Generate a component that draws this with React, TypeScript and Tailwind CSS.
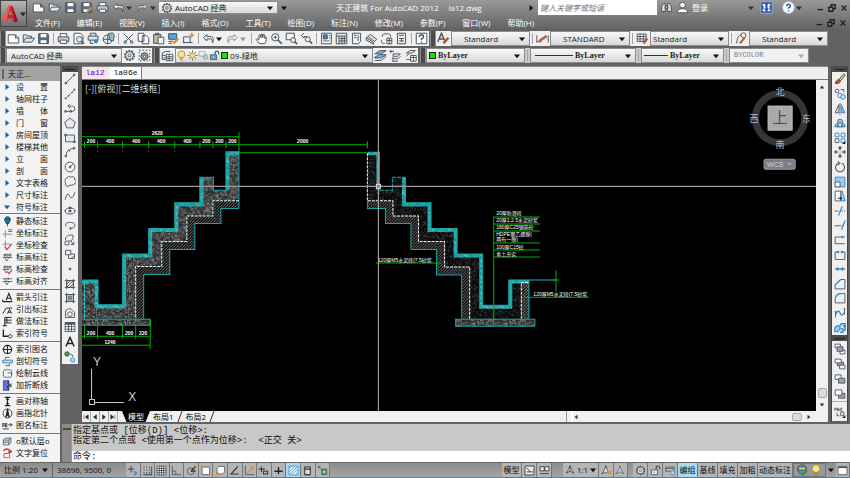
import React from "react";

type Glyphs = Record<string, React.ReactNode>;

const BLUE = "#2f86cc";
const ORANGE = "#e2902f";

/* Every icon is drawn on a 16 x 16 grid. */
const glyphs: Glyphs = {
  new: <path d="M1.500 3.500h9l4 4v6h-13zM10.500 3.500v4h4" fill="#fff" />,
  open: <path d="M1.500 12.500v-9h4l1 1.500h5v2.500M1.500 12.500l3-5h11l-3.500 5z" fill="#dfe6ea" />,
  save: (
    <>
      <path d="M2 2h11l1 1v11H2z" fill="#5b6c7d" />
      <path d="M4.500 2.500h7v4h-7zM4.500 10h7v3.500h-7z" fill="#fff" stroke="none" />
    </>
  ),
  saveAs: (
    <>
      <path d="M2 2h11l1 1v11H2z" fill="#5b6c7d" />
      <path d="M4.500 2.500h7v4h-7zM4.500 10h5v3.500h-5z" fill="#fff" stroke="none" />
      <path d="M8 14l6-6" stroke={ORANGE} strokeWidth="2.500" />
    </>
  ),
  print: (
    <>
      <path d="M4 6V2h8v4" fill="#fff" />
      <path d="M1.500 6h13v6h-13z" fill="#c7ced3" />
      <path d="M4 10h8v4H4z" fill="#fff" />
    </>
  ),
  preview: (
    <>
      <path d="M2.500 1.500h8l3 3v10h-11z" fill="#fff" />
      <circle cx="9" cy="9" r="3.500" fill="#dcebf4" />
      <path d="M11.500 11.500l3 3" strokeWidth="2" />
    </>
  ),
  publish: (
    <>
      <path d="M4 5V1.500h7V5M1.500 5h12v5h-12z" fill="#dfe4e8" />
      <circle cx="11" cy="11.500" r="2.500" fill={BLUE} stroke="none" />
      <path d="M4 10v4h4" />
    </>
  ),
  globe3d: (
    <>
      <circle cx="7" cy="9" r="5.500" fill="#e7eef2" />
      <path d="M7 3.500v11M1.500 9h11" />
      <path d="M8 2l5-1 2 3-1 7-4-1z" fill="#8fcbe0" />
      <path d="M9 4l3 0v4" stroke={ORANGE} />
    </>
  ),
  cut: <path d="M2 2l10 10M14 2L4 12M2.500 12.500a1.500 1.500 0 1 0 3 0a1.500 1.500 0 1 0-3 0M10.500 12.500a1.500 1.500 0 1 0 3 0a1.500 1.500 0 1 0-3 0" />,
  copy: <path d="M1.500 1.500h7v10h-7zM6.500 4.500h5l3 3v7h-8z" fill="#fff" />,
  paste: (
    <>
      <path d="M2 3h9v11H2z" fill="#c2b39a" />
      <path d="M4.500 1.500h4v2h-4z" />
      <path d="M7.500 6.500h7v8h-7z" fill="#fff" />
    </>
  ),
  match: (
    <>
      <path d="M2 2h10v7H2z" fill="#5d9fd3" />
      <path d="M2 11.500h6M2 14h4" />
      <path d="M8 14l6-6" stroke={ORANGE} strokeWidth="3" />
    </>
  ),
  block: (
    <>
      <path d="M2 6h8v7H2zM1 13h4M9 13h4" />
      <path d="M12 1v6M9 4h6" stroke={ORANGE} strokeWidth="2" />
    </>
  ),
  undo: <path d="M6 3L2 7l4 4V8.500h5q2 0 2 5 3-8-3-8H6z" fill="#eef2f4" />,
  redo: <path d="M10 3l4 4-4 4V8.500H5q-2 0-2 5-3-8 3-8h4z" fill="#eef2f4" opacity="0.600" />,
  hand: <path d="M5 14l-3.500-5 1-1L5 9.500V4l1.500-.5L7.500 7V2.500L9 2.500 9.500 7l1-4 1.500.5V8l1-2 1 .5-.5 5-1.500 3z" fill="#fff" />,
  zoomRt: (
    <>
      <circle cx="6.500" cy="6.500" r="4.500" fill="#eaf3f8" />
      <path d="M10 10l4.500 4.500" strokeWidth="2" />
      <path d="M4.500 6.500h4M6.500 4.500v4" />
    </>
  ),
  zoomWin: (
    <>
      <path d="M1.500 1.500h10v8h-10z" />
      <circle cx="10" cy="10" r="3" fill="#eaf3f8" />
      <path d="M12 12l3 3" strokeWidth="2" />
    </>
  ),
  zoomPrev: (
    <>
      <path d="M5 1.500L1.500 4.500 5 7.500V5.500h4" />
      <circle cx="9.500" cy="9" r="3" fill="#eaf3f8" />
      <path d="M12 11.500l3 3" strokeWidth="2" />
    </>
  ),
  props: (
    <>
      <path d="M2 1.500h12v13H2z" fill="#fff" />
      <path d="M4 3.500h5v5H4z" fill={BLUE} />
      <path d="M4 11h8M11 4.500h2M11 7.500h2" />
    </>
  ),
  center: (
    <>
      <path d="M1.500 1.500h13v13h-13z" fill="#e5eaed" />
      <path d="M1.500 5h13M5 5v9.500M5 8h9M5 11h9M8.500 5v9.500M11.500 5v9.500" />
    </>
  ),
  palette: <path d="M3 1.500h10v10l-3 3H3zM10 4v7M5 4h3M5 7h3" fill="#eef1f3" />,
  sheet: <path d="M1.500 7l5-4 8 6-4 4zM1.500 7v3l9 5v-2M4 6l7 5" fill="#dfe5e9" />,
  markup: <path d="M3 6a3 3 0 0 1 5-3 3 3 0 0 1 5 3M2 10a3 3 0 0 0 4 4M8.500 7.500h6v7h-6zM8.500 10.500h6M11.500 7.500v7" />,
  calc: (
    <>
      <path d="M3 1.500h10v13H3z" fill="#e8edf0" />
      <path d="M5 4h6M5 8h6M5 11h6M8 8v4" />
    </>
  ),
  help: (
    <>
      <path d="M1.500 1.500h13v13h-13z" fill="#fff" />
      <path d="M5.500 6q0-2.500 2.500-2.500T10.500 6Q10.500 7.500 8 8.500v1.500M8 12v1.500" strokeWidth="1.800" />
    </>
  ),
  textStyle: (
    <>
      <path d="M1 12L5.500 1.500 10 12M3 8.500h5" strokeWidth="1.800" />
      <path d="M8 14l6-7" stroke="#ad6130" strokeWidth="3" />
    </>
  ),
  dimStyle: (
    <>
      <path d="M1 4v9M15 4v9M1 12h6" />
      <path d="M4 11l9-6" stroke="#ad6130" strokeWidth="3" />
    </>
  ),
  tableStyle: (
    <>
      <path d="M1.500 2.500h11v9h-11zM1.500 5.500h11M5 2.500v9M9 2.500v9M1.500 8.500h11" fill="#fff" />
      <path d="M9 14l5-6" stroke="#ad6130" strokeWidth="3" />
    </>
  ),
  leaderStyle: (
    <>
      <path d="M2 14Q3 4 8 3" />
      <circle cx="10.500" cy="4" r="3" fill="#fff" />
      <path d="M6 14l6-7" stroke="#ad6130" strokeWidth="2.500" />
    </>
  ),
  gear: (
    <>
      <circle cx="8" cy="8" r="5.800" strokeDasharray="2.300 1.300" strokeWidth="2" />
      <circle cx="8" cy="8" r="4.800" fill="#eee" />
      <circle cx="8" cy="8" r="1.800" />
    </>
  ),
  gearFrame: (
    <>
      <path d="M1.500 1.500h13v13h-13z" strokeDasharray="2 2" />
      <circle cx="8" cy="9" r="4.500" fill="#8e9ba6" />
      <circle cx="8" cy="9" r="1.500" fill="#fff" />
    </>
  ),
  layers: (
    <>
      <path d="M1.500 5l4-2h6M1.500 5v8h4M1.500 8h4M3 11h3" />
      <path d="M6.500 6.500h8v8h-8zM6.500 9.500h8M6.500 12h8M10 6.500v8" fill="#fff" />
    </>
  ),
  bulb: <path d="M5.500 11Q3 8.500 3 6a5 5 0 0 1 10 0q0 2.500-2.500 5zM6 12.500h4M6.500 14.500h3" fill="#ffe37d" stroke="#9c8751" />,
  sun: (
    <>
      <path d="M8 .5v3M8 12.500v3M.5 8h3M12.500 8h3M3 3l2 2M11 11l2 2M13 3l-2 2M5 11l-2 2" />
      <circle cx="8" cy="8" r="3.500" fill="#ffe37d" stroke="#a98e3d" />
    </>
  ),
  sunVp: (
    <g opacity="0.450">
      <path d="M1.500 2h9v7h-9zM8 7h6v6H8z" />
      <circle cx="11" cy="10" r="2" />
    </g>
  ),
  unlock: (
    <>
      <path d="M9 7V4a2.500 2.500 0 0 1 5 0v2" strokeWidth="1.800" />
      <path d="M2 7h9v7H2z" fill="#5fa4d8" />
      <path d="M6 9.500v2" stroke="#fff" />
    </>
  ),
  unlockGray: (
    <>
      <path d="M9 7V4a2.500 2.500 0 0 1 5 0v2" strokeWidth="1.800" />
      <path d="M2 7h9v7H2z" fill="#e6e6e6" />
      <path d="M6 9.500v2" />
    </>
  ),
  layerMake: (
    <>
      <path d="M1 6l6-4h8l-6 4zM1 10l6-3h8l-6 4H1z" fill="#74b5e3" />
      <path d="M1 14h8l6-5" />
    </>
  ),
  layerPrev: <path d="M1 3h5M1 3l2-2M1 3l2 2M5 6h9l-3 3H5zM5 10l-1 2h7l3-3M5 13l-1 2h7" fill="#eee" />,
  layerState: (
    <>
      <path d="M3 5l4-3h7l-4 3zM3 9l3-3M3 13h4" />
      <path d="M8 8h7v7H8zM8 10.500h7M11.500 8v7" fill="#fff" />
    </>
  ),
  line: <path d="M2.500 13.500l11-11M1.500 12.500h2v2h-2zM12.500 1.500h2v2h-2z" />,
  xline: <path d="M1.500 14.500l13-13M5 11h1.500v-1.500M10 6h1.500V4.500M1.500 12.500v2h2M12.500 1.500h2v2" strokeDasharray="4 1" />,
  pline: <path d="M2 12.500h9a3.500 3.500 0 0 0 0-7H6M8 3L5 5.500 8 8M1 11.500h2v2H1zM8 11.500h2v2H8z" />,
  polygon: <path d="M8 1.500L15 7l-2.500 7.500h-9L1 7z" fill="#e4eaee" />,
  rect: <path d="M2 4h12v9H2zM1 3h2v2H1zM13 12h2v2h-2z" fill="#e4eaee" />,
  arc: <path d="M2.500 13.500Q3 4 13.500 3M1.500 12.500h2v2h-2zM12.500 2h2v2h-2zM5.500 5.500h2v2" />,
  circle: (
    <>
      <circle cx="8" cy="8" r="6.500" fill="#f2f5f6" />
      <path d="M8 8l4-4M7 7h2v2H7z" />
    </>
  ),
  cloud: <path d="M4 4a3 3 0 0 1 5-1 3 3 0 0 1 5 3 3 3 0 0 1-1 6 3 3 0 0 1-5 1 3 3 0 0 1-6-2 3 3 0 0 1 0-4 2 2 0 0 1 2-3z" fill="#eef2f4" />,
  spline: <path d="M1.500 13Q4 1 7.500 8t7-5" />,
  ellipse: (
    <>
      <ellipse cx="8" cy="8" rx="6.500" ry="4" fill="#f2f5f6" />
      <path d="M7 7h2v2H7zM7 3h2v1.500H7zM1 7.500h1.500M14 7.500h1" strokeWidth="1.500" />
    </>
  ),
  ellArc: <path d="M3 10Q0 5 7 4.500T14.500 8 9 12.500M9 11v3l-2-1.500z" />,
  insert: <path d="M2 8V5l4-3.500h6V6l-3 4M1.500 9.500h5v5h-5zM7 8l6 6M13 10v4H9" />,
  mkBlock: <path d="M2 3h7v6H2zM6 9v5h8V8h-5M13 11l-4 3" fill="#eceff1" />,
  point: <path d="M7 7h2v2H7z" fill="#4b5560" />,
  hatch: <path d="M3.500 3.500h9v9h-9zM1 3.500h14M1 12.500h14M3.500 1v14M12.500 1v14M4 8l4-4M4 12l8-8M8 12l4-4" />,
  gradient: (
    <>
      <path d="M3.500 3.500h9v9h-9zM1 3.500h14M1 12.500h14M3.500 1v14M12.500 1v14" />
      <path d="M5 5h6v6H5z" fill="#7b8791" stroke="none" />
    </>
  ),
  region: (
    <>
      <path d="M2 14V5q4-5 8-2l4 4v7z" fill="#e7ecef" />
      <circle cx="8" cy="9.500" r="3" fill="#fff" />
    </>
  ),
  table: (
    <>
      <path d="M1.500 2h13v12h-13z" fill="#fff" />
      <path d="M1.500 3.500h13" strokeWidth="3" />
      <path d="M1.500 7.500h13M1.500 11h13M6 2v12M10 2v12" />
    </>
  ),
  mtext: <path d="M2.500 14L8 2l5.500 12M4.500 10h7" strokeWidth="2" stroke="#222" />,
  addSel: (
    <>
      <circle cx="4" cy="4" r="3" fill="#4b9c3b" />
      <circle cx="11.500" cy="12" r="2.800" fill="#bfe2f6" stroke={BLUE} />
      <path d="M8 4q4 0 4 4" />
    </>
  ),
  erase: (
    <>
      <path d="M6 9l7-8 2 2-7 8z" fill="#f2bd60" />
      <path d="M2 12l4-4 3 3-3 3H2z" fill="#b85432" stroke="#8b3a22" />
    </>
  ),
  copyObj: (
    <>
      <circle cx="4" cy="4" r="2.500" />
      <path d="M9 2h4v4" />
      <circle cx="8" cy="10" r="3" stroke={BLUE} />
      <circle cx="12" cy="12" r="3" stroke={BLUE} fill="#cde6f7" />
    </>
  ),
  mirror: (
    <>
      <path d="M6.500 2v11h-5z" fill="#dfe5e9" />
      <path d="M9.500 2v11h5z" fill="#7abced" stroke={BLUE} />
      <path d="M8 0v16" strokeDasharray="2 1" />
    </>
  ),
  offset: (
    <>
      <path d="M1.500 13h13q0-4-3-4V7q0-4-3.500-4T5 7v2q-3.500 0-3.500 4z" fill="#9ccdf0" stroke={BLUE} strokeWidth="1.500" />
      <path d="M4 13h8q0-2-2.500-2V8Q8 5.500 6.500 8v3Q4 11 4 13z" fill="#fff" />
    </>
  ),
  array: (
    <>
      <path d="M1.500 9h5v5h-5z" fill="#fff" />
      <path d="M1.500 1.500h5v5h-5zM9.500 1.500h5v5h-5zM9.500 9h5v5h-5z" stroke={BLUE} />
      <path d="M15 12v4h-4z" fill="#111" stroke="none" />
    </>
  ),
  move: <path d="M8 1v5M8 10v5M1 8h5M10 8h5M6 3l2-2 2 2M6 13l2 2 2-2M3 6L1 8l2 2M13 6l2 2-2 2" strokeWidth="1.600" />,
  rotate: <path d="M5.500 3a6 6 0 1 0 5 0M5 .5L8 3 5 5.500" strokeWidth="1.400" />,
  scale: (
    <>
      <path d="M1.500 1.500h13v13h-13z" fill="#9ccdf0" stroke={BLUE} />
      <path d="M1.500 8h6.500v6.500H1.500z" fill="#fff" />
    </>
  ),
  stretch: (
    <>
      <path d="M9 1.500h2l4 13H9z" fill="#9ccdf0" stroke={BLUE} />
      <path d="M1.500 1.500H9v13H1.500z" fill="#fff" />
      <path d="M5 11h5M8 9l2 2-2 2" stroke="#111" />
    </>
  ),
  trim: (
    <>
      <path d="M1 8h5" />
      <path d="M6 14l5-12" stroke={BLUE} strokeWidth="1.600" />
      <path d="M10 8h5" strokeDasharray="2 1" stroke={BLUE} />
    </>
  ),
  extend: (
    <>
      <path d="M1 9h6" />
      <path d="M7 9h4" strokeDasharray="2 1" />
      <path d="M10 14l5-12" stroke={BLUE} strokeWidth="1.600" />
    </>
  ),
  breakPt: (
    <>
      <path d="M9 4H1.500v9h13M14.500 4h-2" />
      <path d="M10 3h2v2h-2z" fill={BLUE} stroke={BLUE} />
    </>
  ),
  breakTwo: (
    <>
      <path d="M4 4H1.500v10h13V4H12" />
      <path d="M4.500 3h2v2h-2zM9.500 3h2v2h-2z" fill={BLUE} stroke={BLUE} />
    </>
  ),
  join: (
    <>
      <path d="M1 8h14" />
      <path d="M4 6l3 2-3 2zM12 6L9 8l3 2z" fill={BLUE} stroke={BLUE} />
    </>
  ),
  chamfer: (
    <>
      <path d="M9 2h5.500v12.500h-13V9" fill="#eef1f3" />
      <path d="M1.500 9L9 2" stroke={BLUE} strokeWidth="1.800" />
    </>
  ),
  fillet: (
    <>
      <path d="M10 2h4.500v12.500h-13V10" fill="#eef1f3" />
      <path d="M1.500 10Q2 2 10 2" stroke={BLUE} strokeWidth="1.800" />
    </>
  ),
  blend: (
    <>
      <path d="M2 14V6M14 10V2M1 6h2M13 2h2" />
      <path d="M2 10q4-8 6-2t6-1" stroke={BLUE} strokeWidth="1.600" />
    </>
  ),
  explode: <path d="M1 8l3-3h4v4l-3 4H1zM8 4l2-2h5l-2 4M9 9h3v5H8M13 7l2-2v5l-2 2" fill="#9ccdf0" stroke={BLUE} strokeWidth="1.500" />,
  front: (
    <>
      <path d="M1.500 1.500h7v5h-7zM8 9.500h6.500v5H8z" fill="#fff" />
      <path d="M4 5h8v6H4z" fill="#9aa4b2" />
    </>
  ),
  back: (
    <>
      <path d="M4.500 5.500h8v5h-8z" fill="#9aa4b2" />
      <path d="M1.500 1.500h8v5h-8zM7.500 9.500h7v5h-7z" fill="#fff" />
    </>
  ),
  above: (
    <>
      <path d="M1.500 2.500h8v6h-8z" fill="#fff" />
      <path d="M6 7h8.500v6.500H6z" fill="#9aa4b2" />
    </>
  ),
  under: (
    <>
      <path d="M6 7h8.500v6.500H6z" fill="#9aa4b2" />
      <path d="M1.500 2.500h9v7h-9z" fill="#fff" />
    </>
  ),
  abc: (
    <>
      <path d="M1 6V3h2v3M5 6V2M5 6h2V4H5M11 3H9v3h2M4 9v4h3M9 8h4v5H9z" />
      <path d="M15 12v4h-4z" fill="#111" stroke="none" />
    </>
  ),
  binoculars: <path d="M2 13V7l2-4h2.500v10zM9.500 13V3H12l2 4v6zM6.500 6h3v3h-3z" fill="#d8dde0" />,
  user: (
    <>
      <circle cx="8" cy="5" r="3.500" fill="#fff" />
      <path d="M1.500 14.500q0-5 6.500-5t6.500 5z" fill="#fff" />
    </>
  ),
  exchange: (
    <>
      <path d="M1 1h14v14H1z" fill="#2d55a5" stroke="#93a9d3" />
      <path d="M6 4v5M10 4v5M6 11v2M10 11v2M3 5l2-1v8l-2-1M13 5l-2-1v8l2-1" stroke="#fff" strokeWidth="1.300" />
    </>
  ),
  helpRound: (
    <>
      <circle cx="8" cy="8" r="7" fill="#fff" stroke="#d0d7e2" />
      <path d="M5.800 6.500q0-2.500 2.200-2.500t2.200 2.200Q10.200 7.500 8 8.500v1M8 11.500V13" strokeWidth="2" stroke="#3166b5" />
    </>
  ),
  pin: <path d="M8 15v-4M5 8q-2-2-1-4 1-3 4-3t4 3q1 2-1 4l-1 3H6z" fill="#1b6f88" stroke="#173f5c" />,
  coord: (
    <>
      <path d="M1 9h14M5 14V3" stroke="#8077b0" />
      <path d="M9 5h6M9 2.500h6" />
    </>
  ),
  coordChk: (
    <>
      <path d="M1 6h13M5 13V1" stroke="#8077b0" />
      <path d="M4 10l3 4 7-8" stroke="#dd4d38" strokeWidth="2" />
    </>
  ),
  level: <path d="M1 8h14M4 8l3 5 3-5M3 3h2v3H3zM7 3h2v3H7zM11 3h2v3h-2z" />,
  levelChk: (
    <>
      <path d="M1 8h10M3 8l3 5 2-3M3 3h2v3H3zM7 3h2v3H7zM11 3h2v3h-2z" />
      <path d="M8 11l2 3 5-6" stroke="#dd4d38" strokeWidth="2" />
    </>
  ),
  levelAl: <path d="M1 4h14M1 8h14M4 4l3 4M4 8l3 5 3-5M9 2v4" />,
  arrowA: <path d="M1 14h3M1 14v-3M6 12l4-10 4 10M7.500 9h5M4 14h11" stroke="#222" strokeWidth="1.600" />,
  leadA: <path d="M1 14l5-8h9M8 14l3-6 3 6M9 12h4" stroke="#222" strokeWidth="1.400" />,
  practice: <path d="M4 15V2M4 2h10M4 6h10M4 10h10M7 2v8M1 14h6" stroke="#222" strokeWidth="1.400" />,
  indexS: (
    <>
      <path d="M2 2v10h7" stroke="#222" strokeWidth="2" />
      <circle cx="12" cy="12" r="2.500" stroke="#222" />
    </>
  ),
  indexN: (
    <>
      <circle cx="8" cy="8" r="6" stroke="#222" strokeWidth="1.600" />
      <path d="M1 8h14M8 2v12" stroke="#222" strokeWidth="1.500" />
    </>
  ),
  section: (
    <>
      <path d="M1 6h14v4H1z" fill="#bde0ef" stroke="#2f7da1" />
      <path d="M5 2h6M5 14h6M5 2v3M11 11v3" stroke="#444" />
    </>
  ),
  rcloud: <path d="M2 4q2-3 4-1 2-2 4 0 3-2 4 1v8q-2 3-4 1-2 2-4 0-3 2-4-1zM8 7h6v3" />,
  zig: (
    <>
      <path d="M2 1h8v14H2z" fill="#6672d6" stroke="#3a44a8" />
      <path d="M9 1v5l4 2-6 2 2 1v4M13 5v6" stroke="#222" />
    </>
  ),
  axis: <path d="M8 2v12M4 2h8M4 14h8M6 5h4M6 11h4" stroke="#222" strokeWidth="1.800" />,
  north: (
    <>
      <circle cx="8" cy="8" r="6.500" stroke="#222" />
      <path d="M8 1l2.500 12L8 11l-2.500 2z" fill="#222" stroke="#222" />
    </>
  ),
  drawName: <path d="M1 10V5h2v5M5 5v5h2V5zM9 7h5M1 13h9M12 5l3 2-3 2" stroke="#222" />,
  defLayer: <path d="M2 6l3-3h8v6l-3 4H2zM2 6h8v7M10 6l3-3M2 9h8" fill="#dbe9f1" />,
  textReset: (
    <>
      <path d="M2 4q5-5 10 0v3M12 7l-3-2M12 7l2-3" stroke="#cf3030" strokeWidth="2" />
      <path d="M3 8h8v6H3z" fill="#fff" stroke="#cf3030" />
    </>
  ),
  infer: (
    <>
      <path d="M1 6h9M6 1v10" strokeWidth="1.800" />
      <path d="M10 9l4 3-4 3" stroke={BLUE} strokeWidth="2" />
    </>
  ),
  snap: <path d="M3 2v2M3 6v2M3 10v2M7 2v2M7 6v2M7 10v2M11 2v2M11 6v2M11 10v2M2 14h12V2" strokeWidth="1.500" />,
  grid: <path d="M1.500 1.500h13v13h-13zM1.500 5h13M1.500 8h13M1.500 11h13M5 1.500v13M8 1.500v13M11 1.500v13" fill="#e5e5e5" />,
  ortho: <path d="M2 1v13h13M2 9h5v5" />,
  polar: (
    <>
      <circle cx="7" cy="9" r="5" />
      <path d="M7 9l7-7M7 9h7" stroke="#333" strokeWidth="1.800" />
    </>
  ),
  osnap: (
    <>
      <path d="M3 3h11v11H3z" fill="#fff" />
      <path d="M1 1h4v4H1z" fill={ORANGE} stroke="none" />
    </>
  ),
  osnap3: (
    <>
      <path d="M3 5l3-3h8v8l-3 3H3z" fill="#fff" />
      <circle cx="4" cy="13" r="2" stroke={ORANGE} />
    </>
  ),
  otrack: <path d="M13 2L3 13h11" stroke="#333" strokeWidth="1.600" />,
  ducs: (
    <>
      <path d="M2 1v13h13" />
      <path d="M4 12l9-9M9 3h4v4" stroke={ORANGE} strokeWidth="1.600" />
    </>
  ),
  dyn: <path d="M1 6h9M5 2v8M8 9h6v4H8z" strokeWidth="1.500" stroke="#333" />,
  lwt: <path d="M2 9h12M8 3v10" stroke="#222" strokeWidth="2" />,
  tpy: <path d="M1.500 1.500h13v13h-13zM2 5l3-3M2 10l8-8M2 14L14 2M6 14l8-8M11 14l3-3" fill="#eaf7ff" stroke="#3b93cc" />,
  qp: <path d="M4 3h8v11H4zM4 6h8" fill="#ddd" stroke="#333" strokeWidth="1.500" />,
  sc: (
    <>
      <path d="M2 2l5 5M2 2h3M2 2v3" />
      <path d="M7 6h7v8H7z" fill="#4da64a" />
      <path d="M9 10h3M10.500 8.500v3" stroke="#fff" />
    </>
  ),
  paper: <path d="M1.500 1.500h13v13h-13zM4 4l5 6H4M9 10h4" fill="#e9e9e9" stroke="#333" />,
  quickView: <path d="M1.500 2.500h6v6h-6zM8.500 2.500h6v6h-6zM1.500 12.500h13" fill="#eee" stroke="#333" />,
  anno: <path d="M8 1L6 7l-4 6 6-3 6 3-4-6zM8 2v8" fill="#eee" stroke="#333" />,
  annoOn: (
    <>
      <path d="M7 1L5 7l-4 6 6-3 5 3-3-6z" fill="#eee" stroke="#444" />
      <circle cx="12" cy="11" r="2.800" fill={ORANGE} stroke="none" />
    </>
  ),
  annoOff: <path d="M7 1L5 7l-4 6 6-3 6 3-4-6z" fill="#ccc" stroke="#6b6b6b" />,
  hw: (
    <>
      <path d="M1 3h12v6H1zM1 5h12" fill="#bcc3c9" />
      <circle cx="11" cy="11" r="3" fill="#b8def6" stroke={BLUE} />
    </>
  ),
  tray: (
    <>
      <circle cx="8" cy="7" r="6" fill="#4a8fd8" />
      <path d="M3 4h10v4H3z" fill="#f0cf55" />
      <path d="M6 12l3 3 6-6" stroke="#3c9a33" strokeWidth="2.500" />
    </>
  ),
  clean: (
    <>
      <path d="M1.500 2h13v12h-13z" fill="#fff" stroke="#4b5560" />
      <path d="M1.500 3.500h13" strokeWidth="2" />
    </>
  ),
};

function Icon({ name, className = "size-[13px]" }: { name: string; className?: string }) {
  return (
    <svg viewBox="0 0 16 16" fill="none" stroke="#4b5560" strokeWidth="1.200" className={`shrink-0 ${className}`} aria-hidden="true">
      {glyphs[name]}
    </svg>
  );
}

function Caret({ className = "text-[#111]" }: { className?: string }) {
  return (
    <svg viewBox="0 0 8 8" className={`size-1.5 shrink-0 ${className}`} fill="currentColor" aria-hidden="true">
      <path d="M0 2h8L4 7z" />
    </svg>
  );
}

function ToolButton({ name, className = "w-[15px]" }: { name: string; className?: string }) {
  return (
    <button type="button" aria-label={name} className={`flex shrink-0 items-center justify-center ${className}`}>
      <Icon name={name} />
    </button>
  );
}

function Sep() {
  return (
    <span className="flex w-[5px] shrink-0 justify-center py-0.5">
      <span className="w-px bg-[#a5a5a5]" />
    </span>
  );
}

type DropProps = { label: string; value: string; className: string; pad?: string; font?: string; disabled?: boolean; children?: React.ReactNode };

function Drop({ label, value, className, pad = "pl-2.5", font = "", disabled = false, children }: DropProps) {
  return (
    <div className={`relative flex shrink-0 items-center border border-[#8b8b8b] ${disabled ? "bg-[#f1f1f1]" : "bg-linear-to-b from-[#f8f8f8] to-[#d9d9d9]"} ${className}`}>
      {children}
      <select aria-label={label} disabled={disabled} className={`h-full min-w-0 flex-1 appearance-none bg-transparent ${pad} ${font} ${disabled ? "text-[#777]" : "text-[#1a1a1a]"}`}>
        <option>{value}</option>
      </select>
      <span className="pointer-events-none absolute right-1">
        <Caret className={disabled ? "text-[#aaa]" : "text-[#111]"} />
      </span>
    </div>
  );
}

function Grip() {
  return <span className="w-1.5 shrink-0 border-x border-[#8d8d8d] bg-[#4b4b4b]" />;
}

function WindowButtons() {
  return (
    <div className="flex items-center">
      {["M2 7h7", "M1 4h5v5H1zM4 4V1h5v5H6", "M2 2l6 6M8 2l-6 6"].map((d, i) => (
        <button key={d} type="button" aria-label={["最小化", "还原", "关闭"][i]} className="flex w-3 justify-center">
          <svg viewBox="0 0 10 10" className="size-2" fill="none" stroke="#222" strokeWidth="1.700">
            <path d={d} />
          </svg>
        </button>
      ))}
    </div>
  );
}

const menus = ["文件(F)", "编辑(E)", "视图(V)", "插入(I)", "格式(O)", "工具(T)", "绘图(D)", "标注(N)", "修改(M)", "参数(P)", "窗口(W)", "帮助(H)"];

function Header() {
  return (
    <header className="flex h-[30px] shrink-0 bg-linear-to-b from-[#9a9a9a] to-[#626262]">
      <button type="button" aria-label="应用程序菜单" className="mb-[3px] flex w-[27px] shrink-0 items-center border border-[#444] bg-linear-to-b from-[#b4b4b4] to-[#6f6f6f]">
        <svg viewBox="0 0 20 24" className="h-[22px] w-[19px]">
          <path d="M1 20L8 3h4l6 17-5 1-1-4H7l-2 4z" fill="#c9252b" />
          <path d="M8 3l-7 17 4 1 5-18z" fill="#ee5a50" />
          <path d="M8 13l2-5 1.500 5z" fill="#8a8a8a" />
          <path d="M12 3l6 17-3 1z" fill="#8c1217" />
        </svg>
        <Caret className="text-[#222]" />
      </button>
      <div className="flex min-w-0 flex-1 flex-col">
        <div className="flex h-[15px] items-stretch pl-[3px]">
          {["new", "open", "save", "saveAs", "print", "undo"].map((n) => (
            <ToolButton key={n} name={n} className="w-4" />
          ))}
          <span className="flex w-2 items-center"><Caret className="text-[#333]" /></span>
          <ToolButton name="redo" className="w-4" />
          <span className="flex w-2 items-center"><Caret className="text-[#333]" /></span>
          <Drop label="工作空间" value="AutoCAD 经典" className="my-px w-[120px]" pad="pl-0.5">
            <Icon name="gear" className="ml-0.5 size-3" />
          </Drop>
          <span className="flex w-3 items-center justify-center"><Caret /></span>
          <h1 className="flex min-w-0 flex-1 items-center justify-center gap-2.5 whitespace-nowrap text-white">
            <span>天正建筑 For AutoCAD 2012</span>
            <span>la12.dwg</span>
          </h1>
          <span className="flex w-2.5 items-center">
            <svg viewBox="0 0 8 8" className="size-1.5"><path d="M2 0v8l5-4z" fill="#111" /></svg>
          </span>
          <input aria-label="搜索" placeholder="键入关键字或短语" className="w-[119px] shrink-0 bg-white px-0.5 italic placeholder:text-[#777]" />
          <ToolButton name="binoculars" className="ml-px w-4" />
          <ToolButton name="user" className="w-4" />
          <button type="button" className="ml-0.5 text-white">登录</button>
          <span className="ml-9 flex w-3.5 items-center justify-center"><Caret className="text-[#333]" /></span>
          <ToolButton name="exchange" className="w-4" />
          <ToolButton name="helpRound" className="ml-1.5 w-4" />
          <span className="flex w-3 items-center"><Caret className="text-[#333]" /></span>
          <span className="ml-1.5 flex"><WindowButtons /></span>
        </div>
        <nav className="flex h-[15px] items-center pr-px pl-2">
          <div className="flex flex-1 gap-[17px]">
            {menus.map((m) => (
              <button key={m} type="button" className="whitespace-nowrap text-white">{m}</button>
            ))}
          </div>
          <WindowButtons />
        </nav>
      </div>
    </header>
  );
}

const standardGroups = [
  ["new", "open", "save"],
  ["print", "preview", "publish", "globe3d"],
  ["cut", "copy", "paste", "match", "block"],
];

function StandardBar() {
  return (
    <div className="mt-px flex h-[15px] shrink-0">
      <Grip />
      <div className="flex shrink-0 bg-[#f0f0f0]">
        {standardGroups.map((g) => (
          <React.Fragment key={g[0]}>
            {g.map((n) => <ToolButton key={n} name={n} />)}
            <Sep />
          </React.Fragment>
        ))}
        <ToolButton name="undo" />
        <span className="flex w-[9px] items-center"><Caret /></span>
        <ToolButton name="redo" />
        <span className="flex w-[9px] items-center"><Caret className="text-[#999]" /></span>
        <Sep />
        {["hand", "zoomRt", "zoomWin", "zoomPrev"].map((n) => <ToolButton key={n} name={n} />)}
        <Sep />
        {["props", "center", "palette", "sheet", "markup", "calc"].map((n) => <ToolButton key={n} name={n} />)}
        <Sep />
        <ToolButton name="help" />
      </div>
      <span className="w-px" />
      <Grip />
      <div className="flex shrink-0 bg-[#f0f0f0]">
        <ToolButton name="textStyle" />
        <Drop label="文字样式" value="Standard" className="w-[79px]" pad="pl-3" />
        <Sep />
        <ToolButton name="dimStyle" />
        <Drop label="标注样式" value="STANDARD" className="w-[80px]" pad="pl-3" />
        <Sep />
        <ToolButton name="tableStyle" />
        <Drop label="表格样式" value="Standard" className="w-[79px]" pad="pl-0.5" />
        <Sep />
        <ToolButton name="leaderStyle" />
        <Drop label="多重引线样式" value="Standard" className="w-[79px]" pad="pl-3" />
      </div>
    </div>
  );
}

const serif = "font-['Liberation_Serif','Noto_Sans_CJK_SC',serif] font-bold";

function LayerBar() {
  return (
    <div className="mt-0.5 flex h-[15px] shrink-0">
      <Grip />
      <div className="flex shrink-0 bg-[#f0f0f0]">
        <Drop label="工作空间" value="AutoCAD 经典" className="w-[116px]" pad="pl-1" />
        <ToolButton name="gear" />
        <ToolButton name="gearFrame" />
      </div>
      <span className="w-0.5" />
      <Grip />
      <div className="flex shrink-0 bg-[#f0f0f0]">
        <ToolButton name="layers" />
        <Drop label="图层" value="09-绿地" className="w-[198px]" pad="pl-0.5">
          {["bulb", "sun", "sunVp", "unlock"].map((n) => <Icon key={n} name={n} className="size-[11px]" />)}
          <span className="ml-px size-[7px] border border-[#222] bg-[#00ee00]" />
        </Drop>
        {["layerMake", "layerPrev", "layerState"].map((n) => <ToolButton key={n} name={n} />)}
      </div>
      <span className="w-0.5" />
      <Grip />
      <div className="flex shrink-0 bg-[#c9c9c9]">
        <Drop label="颜色" value="ByLayer" className="w-[99px]" pad="pl-0.5" font={serif}>
          <span className="ml-0.5 size-[7px] border border-[#222] bg-[#00ee00]" />
        </Drop>
        <Sep />
        <Drop label="线型" value="ByLayer" className="w-[106px]" pad="pl-0.5" font={serif}>
          <span className="ml-1 h-px w-[38px] bg-[#333]" />
        </Drop>
        <Sep />
        <Drop label="线宽" value="ByLayer" className="w-[83px]" pad="pl-0.5" font={serif}>
          <span className="ml-0.5 h-px w-6 bg-[#333]" />
        </Drop>
        <Sep />
        <Drop label="打印样式" value="BYCOLOR" className="w-[80px]" pad="pl-1" font="font-['Liberation_Mono',monospace] text-[7px]" disabled />
      </div>
    </div>
  );
}

const paletteGroups: [string, string][][] = [
  [["pin", "静态标注"], ["coord", "坐标标注"], ["coordChk", "坐标检查"], ["level", "标高标注"], ["levelChk", "标高检查"], ["levelAl", "标高对齐"]],
  [["arrowA", "箭头引注"], ["leadA", "引出标注"], ["practice", "做法标注"], ["indexS", "索引符号"]],
  [["indexN", "索引图名"], ["section", "剖切符号"], ["rcloud", "绘制云线"], ["zig", "加折断线"]],
  [["axis", "画对称轴"], ["north", "画指北针"], ["drawName", "图名标注"]],
  [["defLayer", "o默认层o"], ["textReset", "文字复位"]],
];

const paletteTop = ["设置", "轴网柱子", "墙体", "门窗", "房间屋顶", "楼梯其他", "立面", "剖面", "文字表格", "尺寸标注", "符号标注"];

function Palette() {
  return (
    <aside className="flex w-[60px] shrink-0 flex-col bg-[#f3f3f3] text-[#111]">
      <div className="flex h-[15px] shrink-0 items-center gap-1 bg-[#a3a3a3] pl-0.5">
        <span className="h-2.5 w-0.5 bg-[#666]" />
        <span>天正...</span>
      </div>
      <ul>
        {paletteTop.map((t, i) => (
          <li key={t}>
            <button type="button" className="flex h-3 w-full items-center">
              <svg viewBox="0 0 8 8" className="ml-1 size-1.5">
                <path d={i === 10 ? "M0 2h8L4 7z" : "M2 0v8l5-4z"} fill="#1c5f9c" />
              </svg>
              <span className="ml-1.5 flex w-8 justify-between whitespace-nowrap">
                {t.length === 2 ? [...t].map((c) => <span key={c}>{c}</span>) : t}
              </span>
            </button>
          </li>
        ))}
      </ul>
      {paletteGroups.map((g) => (
        <ul key={g[0][1]} className="border-t border-[#777] pt-px pb-0.5">
          {g.map(([icon, t]) => (
            <li key={t}>
              <button type="button" className="flex h-3 w-full items-center whitespace-nowrap">
                <Icon name={icon} className="mr-[3px] ml-0.5 size-[11px]" />
                {t}
              </button>
            </li>
          ))}
        </ul>
      ))}
    </aside>
  );
}

const drawTools = ["line", "xline", "pline", "polygon", "rect", "arc", "circle", "cloud", "spline", "ellipse", "ellArc", "insert", "mkBlock", "point", "hatch", "gradient", "region", "table", "mtext", "addSel"];
const modifyTools = ["erase", "copyObj", "mirror", "offset", "array", "move", "rotate", "scale", "stretch", "trim", "extend", "breakPt", "breakTwo", "join", "chamfer", "fillet", "blend", "explode"];

function BarCap() {
  return (
    <div className="flex h-1.5 items-center justify-center bg-[#4a4a4a]">
      <span className="h-px w-2.5 bg-[#222]" />
    </div>
  );
}

function VerticalBar({ tools, className }: { tools: string[]; className: string }) {
  return (
    <div className={`flex flex-col bg-[#f0f0f0] ${className}`}>
      {tools.map((n) => (
        <button key={n} type="button" aria-label={n} className="flex w-full flex-1 items-center justify-center">
          <Icon name={n} className="size-3" />
        </button>
      ))}
    </div>
  );
}

/* Deterministic speckle used by the hatch patterns. */
function speckle(count: number, size: number, seed: number) {
  let s = seed;
  const next = () => {
    s = (s * 16807) % 2147483647;
    return Math.floor((s / 2147483647) * size);
  };
  return Array.from({ length: count }, () => [next(), next()]);
}

const leftTop = "M80 279.500H98V304H122.500V253.500H148.500V228H174.500V202.500H199.500V177";
const leftFill = leftTop + "H213V190H225.500V151.500H238.500V200.500H212.500V215.500H186.500V241H161.500V266H135.500V318H80z";
const leftInner = "M238.500 200.500H212.500V215.500H186.500V241H161.500V266H135.500V318";
const leftOuter = "M238.500 208H220.500V223H194.500V249H169.500V274H143.500V318";
const rightSteps = "M404.500 177V202.500H430V228H456V253.500H481.500V304.500H507.500V279.500H528";
const rightFill = "M366.500 151.500H379V190H391.500V177H404.500V202.500H430V228H456V253.500H481.500V304.500H507.500V279.500H528V318H468.500V266.500H443.500V241H417.500V215.500H392V200.500H366.500z";
const rightInner = "M366.500 153V200.500H392V215.500H417.500V241H443.500V266.500H468.500V318";
const rightOuter = "M366.500 200.500V208H384.500V223H410V249H435.500V274.500H460.500V318";

const dims: [string, number, number][] = [
  ["2620", 157, 135], ["200", 91, 143], ["400", 110, 143], ["400", 136, 143], ["400", 161, 143], ["400", 187, 143],
  ["200", 206, 143], ["200", 219, 143], ["200", 232, 143], ["2000", 302, 143],
  ["200", 91, 334], ["400", 110, 334], ["200", 129, 334], ["220", 143, 334], ["1240", 110, 343],
];

const notes: [string, number][] = [
  ["20厚防滑砖", 215], ["20厚1:2.5水泥砂浆", 222], ["180厚C25钢筋砼", 229], ["HDPE聚乙烯膜(", 236],
  ["两布一膜)", 241], ["100厚C15砼", 248], ["素土夯实", 255],
];

function Drawing() {
  return (
    <svg viewBox="82 80 734 330" preserveAspectRatio="xMinYMin slice" className="block size-full bg-black font-['Liberation_Sans','Noto_Sans_CJK_SC',sans-serif]">
      <defs>
        <pattern id="concrete" width="32" height="32" patternUnits="userSpaceOnUse">
          <rect width="32" height="32" fill="#3a3a3a" />
          {speckle(420, 32, 77).map(([x, y], i) => (
            <rect key={i} x={x} y={y} width="1" height="1" fill={i % 3 ? "#8c8c8c" : "#111"} />
          ))}
        </pattern>
        <pattern id="concreteDark" width="32" height="32" patternUnits="userSpaceOnUse">
          <rect width="32" height="32" fill="#0d0d0d" />
          {speckle(260, 32, 913).map(([x, y], i) => (
            <rect key={i} x={x} y={y} width="1" height="1" fill={i % 3 ? "#4a4a4a" : "#000"} />
          ))}
        </pattern>
        <pattern id="tile" width="16" height="16" patternUnits="userSpaceOnUse">
          <rect width="16" height="16" fill="#1ea0a2" />
          {speckle(80, 16, 401).map(([x, y], i) => (
            <rect key={i} x={x} y={y} width="1" height="1" fill={i % 3 ? "#5fcfcf" : "#0e7c7e"} />
          ))}
        </pattern>
        <pattern id="brick" width="3" height="3" patternUnits="userSpaceOnUse">
          <path d="M-1 1l2-2M0 3l3-3M2 4l2-2" stroke="#777" strokeWidth="0.800" />
        </pattern>
        <clipPath id="leftClip"><path d={leftFill} /></clipPath>
        <clipPath id="rightClip"><path d={rightFill} /></clipPath>
      </defs>

      <g stroke="#00b400" fill="none">
        <path d="M82 136.500H239M82 144.500H366M238.500 152.500H366M238.500 132V152M366.500 141V148" />
        <path d="M84.500 141V148M97.500 141V148M122.500 141V148M148.500 141V148M174.500 141V148M199.500 141V148M212.500 141V148M225.500 141V148" />
        <path d="M84.500 151v1M97.500 151v1M122.500 151v1M148.500 151v1M174.500 151v1" />
      </g>

      <path d={leftInner + "H143.500V274H169.500V249H194.500V223H220.500V208H238.500z"} fill="url(#brick)" />
      <path d={leftFill} fill="url(#concrete)" />
      <path d={leftTop} clipPath="url(#leftClip)" fill="none" stroke="url(#tile)" strokeWidth="7" />
      <path d="M225.500 190V151.500H238.500" clipPath="url(#leftClip)" fill="none" stroke="url(#tile)" strokeWidth="7" />
      <path d={leftTop + "H213V190H225.500V151.500H238.500V208"} fill="none" stroke="#17a6a8" />
      <path d={leftOuter} fill="none" stroke="#17a6a8" />
      <path d={leftInner} fill="none" stroke="#c9f4f4" strokeDasharray="3 1" />
      <path d="M84.500 281V318" stroke="#38d6d6" strokeDasharray="3 1" />
      <rect x="80" y="318.500" width="70" height="6" fill="url(#concrete)" stroke="#17a6a8" />

      <path d={rightInner + "H460.500V274.500H435.500V249H410V223H384.500V208H366.500z"} fill="url(#brick)" />
      <path d={rightFill} fill="url(#concreteDark)" />
      <rect x="520" y="282" width="8" height="36" fill="url(#brick)" />
      <path d={rightSteps} clipPath="url(#rightClip)" fill="none" stroke="url(#tile)" strokeWidth="7" />
      <path d="M366.500 151.500H379V190" clipPath="url(#rightClip)" fill="none" stroke="url(#tile)" strokeWidth="7" />
      <path d="M379 190H391.500V177H404.500" fill="none" stroke="#17a6a8" strokeDasharray="4 1" />
      <path d="M377.500 156V186" stroke="#b04a4a" strokeDasharray="1 2" />
      <path d={rightSteps} fill="none" stroke="#17a6a8" />
      <path d="M527.500 279.500V318M527 279.500H555" fill="none" stroke="#17a6a8" />
      <path d={rightOuter} fill="none" stroke="#17a6a8" />
      <path d={rightInner} fill="none" stroke="#f2f2f2" strokeDasharray="3 1" />
      <path d="M520 318V282H527" fill="none" stroke="#f2f2f2" strokeDasharray="3 1" />
      <rect x="454.500" y="318.500" width="79" height="7" fill="url(#concrete)" stroke="#17a6a8" />

      <g stroke="#00b400" fill="none">
        <path d="M82 335.500H150M82 344.500H150M150 319V348M84.500 324V338M97.500 324V338M122.500 324V338M135.500 324V338" />
        <path d="M492.500 325V216.500H538.500M492.500 223.500H538.500M492.500 230.500H538.500M492.500 242.500H538.500M492.500 249.500H538.500M492.500 256.500H538.500" />
        <path d="M375 262.500H440M523 296.500H587M554.500 270V290M551 279.500H558" />
      </g>
      <g fill="#fff" fontSize="5">
        {dims.map(([t, x, y]) => (
          <text key={`${x}-${y}`} x={x} y={y} textAnchor="middle" fontWeight="700">{t}</text>
        ))}
        {notes.map(([t, y]) => (
          <text key={y} x="495" y={y}>{t}</text>
        ))}
        <text x="377" y="261">120厚M5水泥砖(7.5砂浆</text>
        <text x="532" y="295">120厚M5水泥砖(7.5砂浆</text>
      </g>

      <path d="M82 186H816M377.500 80V410" stroke="#9c9c9c" fill="none" strokeWidth="1.200" />
      <rect x="375.500" y="184" width="4" height="4" fill="#888" stroke="#ddd" />

      <g stroke="#c8c8c8" fill="none">
        <path d="M89.500 398.500h5v5h-5zM91.500 368V398M95 401.500H124" />
      </g>
      <g fill="#c8c8c8" fontSize="12">
        <text x="97" y="365" textAnchor="middle">Y</text>
        <text x="132" y="400" textAnchor="middle">X</text>
      </g>
      <text x="85" y="92" fontSize="9" fill="#d8d8d8" className="font-['Noto_Sans_CJK_SC',sans-serif]">[-][俯视][二维线框]</text>

      <circle cx="778" cy="118" r="24.500" fill="none" stroke="#353535" strokeWidth="7" />
      <rect x="766" y="106" width="24" height="24" fill="#a9a9ac" stroke="#c2c2c5" />
      <g fontSize="9" fill="#b5b5b5" textAnchor="middle">
        <text x="778" y="95">北</text>
        <text x="778" y="148">南</text>
        <text x="752" y="122">西</text>
        <text x="804" y="122">东</text>
        <text x="778" y="123" fontSize="15" fill="#4b4b4e">上</text>
      </g>
      <rect x="762" y="159" width="31" height="10" rx="2" fill="#7d7d87" stroke="#9a9aa3" />
      <text x="765" y="167" fontSize="7" fill="#d3d3d8">WCS</text>
      <path d="M785 162.500h5l-2.500 3z" fill="#a9a9b3" />
    </svg>
  );
}

function SheetTabs() {
  return (
    <div className="flex h-[11px] shrink-0 items-stretch bg-[#f0f0f0]">
      {["M7 1v6L3 4zM1.500 1v6", "M6 1v6L2 4z", "M2 1v6l4-3z", "M1 1v6l4-3zM6.500 1v6"].map((d, i) => (
        <button key={d} type="button" aria-label={["首页", "上一页", "下一页", "末页"][i]} className="flex w-[9px] items-center justify-center border-r border-[#aaa]">
          <svg viewBox="0 0 8 8" className="size-1.5" fill="#222" stroke="#222" strokeWidth="0.600"><path d={d} /></svg>
        </button>
      ))}
      <button type="button" className="ml-1 flex w-7 items-center justify-center bg-black text-white [clip-path:polygon(0_0,100%_0,84%_100%,16%_100%)]">模型</button>
      {["布局1", "布局2"].map((t) => (
        <React.Fragment key={t}>
          <button type="button" className="flex items-center px-[3px] whitespace-nowrap text-black">{t}</button>
          <svg viewBox="0 0 6 11" className="w-1.5"><path d="M1 11L5 0" stroke="#333" /></svg>
        </React.Fragment>
      ))}
      <span className="flex-1" />
      <div className="flex w-[34%] items-center border-l border-[#999] pl-1">
        <span className="h-full w-0.5 bg-white" />
        <svg viewBox="0 0 8 8" className="size-1.5"><path d="M6 1v6L2 4z" fill="#333" /></svg>
        <span className="flex-1" />
        <span className="h-2 w-2.5 rounded-xs border border-[#aaa] bg-[#dcdcdc]" />
        <svg viewBox="0 0 8 8" className="mx-1 size-1.5"><path d="M2 1v6l4-3z" fill="#333" /></svg>
      </div>
    </div>
  );
}

function DrawingWindow() {
  return (
    <section className="ml-1 flex min-w-0 flex-1 flex-col border-t border-[#888] bg-[#f0eeee]">
      <div className="flex h-[13px] shrink-0 border-b border-[#777] font-['Liberation_Mono',monospace] leading-3">
        <button type="button" className="w-[26px] bg-[#fbe3e3] text-[#2222ee]">la12</button>
        <button type="button" className="ml-0.5 w-8 border-r border-[#777] bg-white text-[#111]">la06e</button>
      </div>
      <div className="flex min-h-0 flex-1">
        <div className="flex min-w-0 flex-1 flex-col">
          <div className="min-h-0 flex-1"><Drawing /></div>
          <SheetTabs />
        </div>
        <div className="flex w-3 shrink-0 flex-col items-center bg-[#f0f0f0] pt-1 pb-3">
          <svg viewBox="0 0 8 8" className="size-1.5"><path d="M1 6h6L4 2z" fill="#333" /></svg>
          <span className="flex-1" />
          <span className="h-2.5 w-[9px] rounded-xs border border-[#aaa] bg-[#dcdcdc]" />
          <svg viewBox="0 0 8 8" className="mt-1 mb-0.5 size-1.5"><path d="M1 2h6L4 6z" fill="#333" /></svg>
        </div>
      </div>
    </section>
  );
}

function CommandLine() {
  return (
    <section className="mt-0.5 flex h-[38px] shrink-0 bg-[#c8c8c8] font-['Liberation_Mono','Noto_Sans_CJK_SC',monospace] text-[9px] text-[#111]">
      <div className="flex w-2.5 shrink-0 justify-center border-r border-[#999] bg-[#8a8a8a] pt-1">
        <span className="h-0.5 w-2 bg-[#444]" />
      </div>
      <div className="flex min-w-0 flex-1 flex-col">
        <div className="flex-1 overflow-hidden pt-0.5 pl-px leading-2.5 whitespace-pre">
          <p>指定基点或 [位移(D)] &lt;位移&gt;:</p>
          <p>{"指定第二个点或 <使用第一个点作为位移>:  <正交 关>"}</p>
        </div>
        <label className="flex h-[11px] items-center bg-white pt-px pl-px">
          命令:
          <input aria-label="命令" className="h-full min-w-0 flex-1 pl-1 outline-none" />
        </label>
      </div>
    </section>
  );
}

const toggles = ["infer", "snap", "grid", "ortho", "polar", "osnap", "osnap3", "otrack", "ducs", "dyn", "lwt", "tpy", "qp", "sc"];

function StatusBar() {
  const cell = "flex items-center justify-center border-r border-[#777] bg-[#b5b5b5]";
  return (
    <footer className="flex h-4 shrink-0 items-stretch border-t border-b border-t-[#666] border-b-[#60798c] bg-linear-to-b from-[#8d8d8d] to-[#a4a4a4] whitespace-nowrap text-[#111]">
      <button type="button" className="flex w-[53px] shrink-0 items-center gap-1 border-r border-[#666] pl-1">
        比例 1:20 <Caret />
      </button>
      <span className="flex w-[73px] shrink-0 items-center pl-1">38696, 9500, 0</span>
      <div className="flex w-[204px] shrink-0">
        {toggles.map((n) => (
          <button key={n} type="button" aria-label={n} className={`flex flex-1 items-center justify-center border-r border-[#777] ${n === "tpy" ? "bg-[#a5d9f2]" : "bg-[#b5b5b5]"}`}>
            <Icon name={n} className="size-[11px]" />
          </button>
        ))}
      </div>
      <span className="flex-1" />
      <button type="button" className={`${cell} w-5`}>模型</button>
      <button type="button" aria-label="图纸" className={`${cell} w-[15px]`}><Icon name="paper" className="size-[11px]" /></button>
      <button type="button" aria-label="快速查看" className={`${cell} w-[15px]`}><Icon name="quickView" className="size-[11px]" /></button>
      <span className="w-[11px]" />
      <button type="button" className={`${cell} w-9 gap-0.5`}><Icon name="anno" className="size-[10px]" />1:1<Caret /></button>
      <button type="button" aria-label="注释可见性" className={`${cell} w-[15px]`}><Icon name="annoOn" className="size-[11px]" /></button>
      <button type="button" aria-label="自动比例" className={`${cell} w-[14px]`}><Icon name="annoOff" className="size-[11px]" /></button>
      <span className="w-[5px]" />
      {["gear", "unlockGray", "hw"].map((n) => (
        <button key={n} type="button" aria-label={n} className={`${cell} w-[15px]`}><Icon name={n} className="size-[11px]" /></button>
      ))}
      <button type="button" className="w-5 border-r border-[#777] bg-[#a5dcf0]">编组</button>
      {["基线", "填充", "加粗"].map((t) => (
        <button key={t} type="button" className={`${cell} w-5`}>{t}</button>
      ))}
      <button type="button" className={`${cell} w-[35px]`}>动态标注</button>
      <span className="flex w-[33px] items-center gap-0.5 border border-[#777] bg-[#999] pl-0.5">
        <Icon name="tray" className="size-3" />
        <Icon name="bulb" className="size-3" />
      </span>
      <button type="button" aria-label="状态栏菜单" className="flex w-2.5 items-center justify-center"><Caret /></button>
      <button type="button" aria-label="全屏显示" className={`${cell} w-[14px]`}><Icon name="clean" className="size-[11px]" /></button>
    </footer>
  );
}

export default function App() {
  return (
    <div className="flex h-screen flex-col overflow-hidden bg-[#626262] font-['Open_Sans','Noto_Sans_CJK_SC',sans-serif] text-[8px] leading-none">
      <Header />
      <StandardBar />
      <LayerBar />
      <div className="mt-[3px] flex min-h-0 flex-1">
        <Palette />
        <div className="ml-0.5 flex min-w-0 flex-1 flex-col">
          <div className="flex min-h-0 flex-1 items-stretch">
            <div className="w-4 shrink-0">
              <BarCap />
              <VerticalBar tools={drawTools} className="h-[292px]" />
            </div>
            <DrawingWindow />
            <div className="ml-[3px] flex w-[17px] shrink-0 flex-col border-x border-[#444]">
              <BarCap />
              <VerticalBar tools={modifyTools} className="h-[263px]" />
              <BarCap />
              <VerticalBar tools={["front", "back", "above", "under"]} className="h-[60px]" />
              <VerticalBar tools={["abc"]} className="h-5 border-t border-[#aaa]" />
            </div>
            <span className="w-0.5 shrink-0" />
          </div>
          <CommandLine />
        </div>
      </div>
      <StatusBar />
    </div>
  );
}
